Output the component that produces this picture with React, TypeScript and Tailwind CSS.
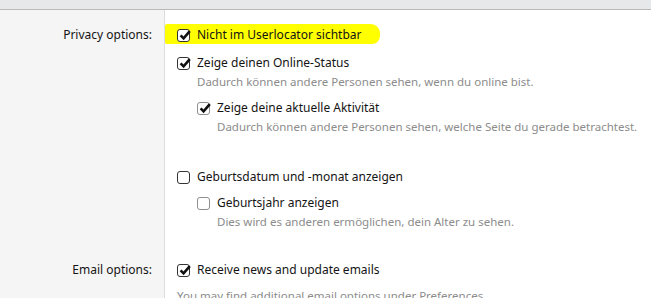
const font = { fontFamily: '"Segoe UI", "Noto Sans", sans-serif' };

type BoxProps = { checked?: boolean; soft?: boolean };

const Box = ({ checked, soft }: BoxProps) => (
  <span
    className={`relative inline-flex h-[13px] w-[13px] shrink-0 items-center justify-center rounded-[3px] border bg-white ${
      soft ? "border-[#8f8f8f]" : "border-[#333]"
    }`}
  >
    {checked && (
      <svg viewBox="0 0 12 12" className="absolute left-[1px] top-[-1px] h-[12px] w-[12px]">
        <path d="M1.6 6.4 L4.6 9.4 L10.8 2.2" fill="none" stroke="#111" strokeWidth="2.6" />
      </svg>
    )}
  </span>
);

const Option = ({
  label,
  hint,
  checked,
  soft,
  className = "",
}: {
  label: string;
  hint?: string;
  checked?: boolean;
  soft?: boolean;
  className?: string;
}) => (
  <div className={className}>
    <label className="flex h-[20px] items-center gap-[7px] whitespace-nowrap text-[12px] text-[#141414]">
      <Box checked={checked} soft={soft} />
      <span>{label}</span>
    </label>
    {hint && (
      <p className="ml-[20px] mt-[1px] h-[16px] whitespace-nowrap text-[11.5px] leading-[16px] text-[#8c8c8c]">
        {hint}
      </p>
    )}
  </div>
);

export default function App() {
  return (
    <div className="h-[298px] w-[651px] overflow-hidden bg-white" style={font}>
      <div className="h-[9px] bg-[#e6e8e9]" />
      <div className="h-[1px] bg-[#b9b9b9]" />
      <div className="flex h-[288px]">
        <div className="w-[165px] shrink-0 border-r border-[#dddddd] bg-[#f5f5f5] pr-[12px] text-right text-[12px] text-[#141414]">
          <div className="mt-[15px] h-[20px] leading-[20px]">Privacy options:</div>
          <div className="mt-[215px] h-[20px] leading-[20px]">Email options:</div>
        </div>
        <div className="flex-1 pl-[12px]">
          <div className="relative mt-[15px]">
            <div className="absolute left-[-12px] top-[-1px] h-[20px] w-[215px] rounded-[2px_9px_8px_2px] bg-[#ffff00]" />
            <div className="relative">
              <Option checked label="Nicht im Userlocator sichtbar" />
            </div>
          </div>
          <Option
            className="mt-[8px]"
            checked
            label="Zeige deinen Online-Status"
            hint="Dadurch können andere Personen sehen, wenn du online bist."
          />
          <Option
            className="ml-[20px] mt-[8px]"
            checked
            soft
            label="Zeige deine aktuelle Aktivität"
            hint="Dadurch können andere Personen sehen, welche Seite du gerade betrachtest."
          />
          <Option className="mt-[32px]" label="Geburtsdatum und -monat anzeigen" />
          <Option
            className="ml-[20px] mt-[6px]"
            soft
            label="Geburtsjahr anzeigen"
            hint="Dies wird es anderen ermöglichen, dein Alter zu sehen."
          />
          <Option className="mt-[30px]" checked label="Receive news and update emails" />
          <p className="mt-[8px] whitespace-nowrap text-[11.5px] leading-[16px] text-[#8c8c8c]">
            You may find additional email options under Preferences
          </p>
        </div>
      </div>
    </div>
  );
}
